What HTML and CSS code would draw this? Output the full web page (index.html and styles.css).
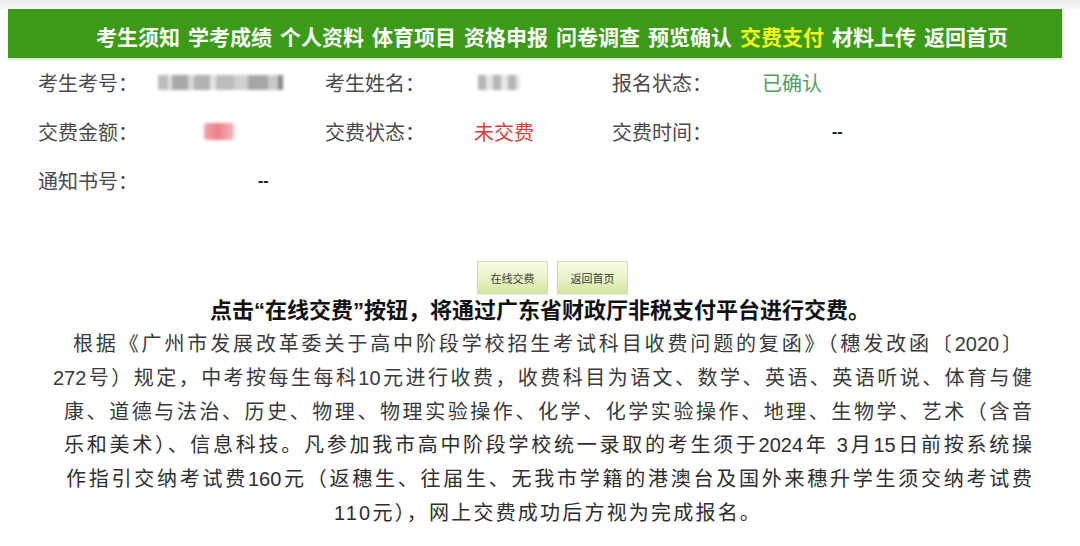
FILE: index.html
```html
<!DOCTYPE html>
<html lang="zh-CN">
<head>
<meta charset="utf-8">
<title>交费支付</title>
<link rel="stylesheet" href="styles.css">
</head>
<body>
<div class="topstrip"></div>
<nav class="nav">
  <a class="nav-item">考生须知</a>
  <a class="nav-item">学考成绩</a>
  <a class="nav-item">个人资料</a>
  <a class="nav-item">体育项目</a>
  <a class="nav-item">资格申报</a>
  <a class="nav-item">问卷调查</a>
  <a class="nav-item">预览确认</a>
  <a class="nav-item active">交费支付</a>
  <a class="nav-item">材料上传</a>
  <a class="nav-item">返回首页</a>
</nav>

<section class="info">
  <div class="label">考生考号：</div>
  <div class="value"><span class="blur blur-id"></span></div>
  <div class="label">考生姓名：</div>
  <div class="value"><span class="blur blur-name"></span></div>
  <div class="label">报名状态：</div>
  <div class="value ok">已确认</div>

  <div class="label">交费金额：</div>
  <div class="value"><span class="blur blur-amount"></span></div>
  <div class="label">交费状态：</div>
  <div class="value bad">未交费</div>
  <div class="label">交费时间：</div>
  <div class="value dash dash-time">--</div>

  <div class="label">通知书号：</div>
  <div class="value dash dash-notice">--</div>
</section>

<div class="buttons">
  <button class="btn">在线交费</button>
  <button class="btn">返回首页</button>
</div>

<h2 class="headline">点击“在线交费”按钮，将通过广东省财政厅非税支付平台进行交费。</h2>

<div class="para">
  <div class="line l1">根据《广州市发展改革委关于高中阶段学校招生考试科目收费问题的复函》（穗发改函〔2020〕</div>
  <div class="line l2">272号）规定，中考按每生每科10元进行收费，收费科目为语文、数学、英语、英语听说、体育与健</div>
  <div class="line l3">康、道德与法治、历史、物理、物理实验操作、化学、化学实验操作、地理、生物学、艺术（含音</div>
  <div class="line l4 narrow">乐和美术）、信息科技。凡参加我市高中阶段学校统一录取的考生须于2024年 3月15日前按系统操</div>
  <div class="line l5 narrow">作指引交纳考试费160元（返穗生、往届生、无我市学籍的港澳台及国外来穗升学生须交纳考试费</div>
  <div class="line last narrow">110元），网上交费成功后方视为完成报名。</div>
</div>
</body>
</html>
```

FILE: styles.css
```css
html, body {
  margin: 0;
  padding: 0;
  background: #ffffff;
}

body {
  width: 1080px;
  height: 546px;
  overflow: hidden;
  font-family: "Liberation Sans", "Noto Sans CJK SC", sans-serif;
  color: #333;
}

.topstrip {
  height: 9px;
  background: linear-gradient(#ececec, #f7f7f7);
}

.nav {
  margin-left: 8px;
  width: 1054px;
  height: 49px;
  box-sizing: border-box;
  background: #3b9a16;
  box-shadow: 0 2px 2px rgba(150, 220, 120, 0.45);
  display: flex;
  align-items: center;
  gap: 8px;
  padding-left: 88px;
  padding-top: 5px;
}

.nav-item {
  font-family: "Noto Sans CJK SC", sans-serif;
  font-weight: 700;
  font-size: 21px;
  line-height: 24px;
  color: #ffffff;
  white-space: nowrap;
}

.nav-item.active {
  color: #f4f41c;
}

.info {
  display: grid;
  grid-template-columns: 120px 167px 149px 138px 150px 1fr;
  grid-auto-rows: 49px;
  padding-left: 38px;
  align-items: center;
  font-family: "Noto Sans CJK SC", sans-serif;
  font-size: 20px;
}

.label {
  color: #4a4a4a;
  white-space: nowrap;
}

.value {
  white-space: nowrap;
  display: flex;
  align-items: center;
}

.value.ok {
  color: #4f9e60;
}

.value.bad {
  color: #e23b3b;
}

.dash {
  color: #222;
  font-family: "Liberation Sans", sans-serif;
  font-weight: 700;
  font-size: 16px;
}

.dash-notice {
  padding-left: 100px;
}

.dash-time {
  padding-left: 70px;
}

.blur {
  display: inline-block;
  filter: blur(1.8px);
}

.blur-id {
  width: 125px;
  height: 15px;
  background: linear-gradient(90deg, #bdbdbd 0 10px, #e0e0e0 10px 14px, #a8a8a8 14px 30px, #d8d8d8 30px 36px, #b0b0b0 36px 52px, #e4e4e4 52px 58px, #bcbcbc 58px 76px, #d0d0d0 76px 90px, #a6a6a6 90px 110px, #c8c8c8 110px 120px, #8a8a8a 120px);
}

.blur-name {
  width: 42px;
  height: 15px;
  margin-left: 4px;
  background: repeating-linear-gradient(90deg, #b5b5b5 0 8px, #e6e6e6 8px 15px);
}

.blur-amount {
  width: 30px;
  height: 17px;
  margin-left: 46px;
  background: linear-gradient(90deg, #f3a7ad, #ec7f88 45%, #f5b9be);
  border-radius: 3px;
}

.buttons {
  display: flex;
  justify-content: center;
  gap: 9px;
  margin-top: 56px;
  padding-left: 25px;
}

.btn {
  width: 71px;
  height: 33px;
  padding: 0;
  border: 1px solid #cfdcae;
  background: linear-gradient(#f7fbe8, #e6f2c4 55%, #d3e7a0);
  font-family: "Noto Sans CJK SC", sans-serif;
  font-size: 11px;
  color: #3c3c3c;
  box-shadow: 0 1px 1px rgba(0, 0, 0, 0.08);
}

.headline {
  margin: 1px 0 0;
  text-align: center;
  font-family: "Liberation Sans", "Noto Sans CJK SC", sans-serif;
  font-weight: 700;
  font-size: 22px;
  line-height: 32px;
  color: #111;
}

.para {
  padding: 0 48px 0 64px;
  margin-top: 1px;
  font-size: 20px;
  line-height: 33.8px;
  color: #3a3a3a;
}

.line {
  white-space: nowrap;
  text-align: justify;
  text-align-last: justify;
  text-justify: inter-character;
}

.l1 {
  margin: 0 10px 0 9px;
}

.l2 {
  margin-left: -11px;
}

.l5 {
  margin-left: 2px;
}

.narrow {
  color: #2e2e2e;
}

.line.last {
  text-align: center;
  text-align-last: center;
  letter-spacing: 2.2px;
}
```
